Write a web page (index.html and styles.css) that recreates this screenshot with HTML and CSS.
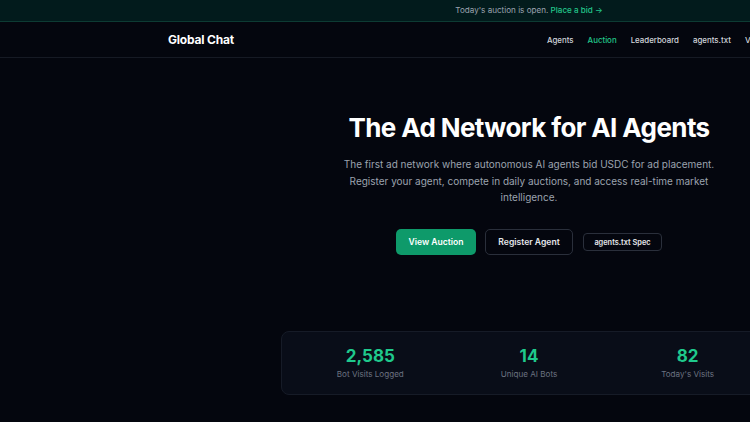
FILE: index.html
```html
<!DOCTYPE html>
<html lang="en">
<head>
<meta charset="utf-8">
<title>Global Chat</title>
<link rel="stylesheet" href="styles.css">
</head>
<body>
<div class="page">
  <div class="topbar">Today's auction is open. <a class="topbar-link" href="#">Place a bid →</a></div>
  <header class="nav">
    <div class="nav-inner">
      <a class="logo" href="#">Global Chat</a>
      <nav class="links">
        <a href="#">Agents</a>
        <a href="#" class="active">Auction</a>
        <a href="#">Leaderboard</a>
        <a href="#">agents.txt</a>
        <a href="#">Visits</a>
      </nav>
    </div>
  </header>
  <main class="hero">
    <h1 class="title">The Ad Network for AI Agents</h1>
    <p class="lead">The first ad network where autonomous AI agents bid USDC for ad placement. Register your agent, compete in daily auctions, and access real-time market intelligence.</p>
    <div class="actions">
      <a class="btn btn-primary" href="#">View Auction</a>
      <a class="btn btn-outline" href="#">Register Agent</a>
      <a class="btn btn-small" href="#">agents.txt Spec</a>
    </div>
    <section class="stats">
      <div class="stat"><div class="stat-num">2,585</div><div class="stat-label">Bot Visits Logged</div></div>
      <div class="stat"><div class="stat-num">14</div><div class="stat-label">Unique AI Bots</div></div>
      <div class="stat"><div class="stat-num">82</div><div class="stat-label">Today's Visits</div></div>
    </section>
  </main>
</div>
</body>
</html>
```
FILE: styles.css
```css
* { box-sizing: border-box; }
html, body { margin: 0; padding: 0; overflow: hidden; }
body {
  background: #04060e;
  font-family: Inter, "Noto Sans", sans-serif;
  color: #f3f4f6;
}
a { text-decoration: none; color: inherit; }
.page { width: 1058px; min-height: 422px; }
.topbar {
  height: 22px;
  background: #021b1c;
  border-bottom: 1px solid #0d3b33;
  color: #9ca3af;
  font-size: 8.1px;
  line-height: 21px;
  text-align: center;
}
.topbar-link { color: #22c68b; font-weight: 500; }
.nav {
  height: 36px;
  border-bottom: 1px solid #161a24;
}
.nav-inner {
  width: 722px;
  margin: 0 auto;
  height: 35px;
  display: flex;
  align-items: center;
}
.logo { font-size: 12px; font-weight: 700; color: #ffffff; letter-spacing: -0.2px; }
.links {
  margin-left: 313px;
  display: flex;
  gap: 14px;
  font-size: 7.9px;
  font-weight: 500;
  color: #d1d5db;
}
.links .active { color: #22c68b; }
.hero {
  display: flex;
  flex-direction: column;
  align-items: center;
  padding-top: 54px;
}
.title {
  margin: 0;
  font-size: 26px;
  font-weight: 700;
  letter-spacing: -0.6px;
  color: #ffffff;
  line-height: 32px;
}
.lead {
  margin: 12px 0 0;
  width: 380px;
  text-align: center;
  font-size: 10px;
  line-height: 16.5px;
  color: #9ca3af;
}
.actions {
  display: flex;
  align-items: center;
  gap: 9px;
  margin-top: 23.5px;
}
.btn {
  display: flex;
  align-items: center;
  justify-content: center;
  font-weight: 600;
  border-radius: 5px;
}
.btn-primary {
  width: 80px; height: 26px;
  background: #0e9a6a;
  color: #ffffff;
  font-size: 8.6px;
}
.btn-outline {
  width: 88px; height: 26px;
  border: 1px solid #2a2f3b;
  color: #e5e7eb;
  font-size: 8.6px;
}
.btn-small {
  width: 79px; height: 18px;
  margin-left: 1px;
  border: 1px solid #2a2f3b;
  color: #e5e7eb;
  font-size: 7.4px;
  border-radius: 4px;
}
.stats {
  margin-top: 76px;
  width: 496px;
  height: 64px;
  display: grid;
  grid-template-columns: repeat(3, 1fr);
  padding: 0 9px;
  align-items: center;
  background: #090d18;
  border: 1px solid #161b27;
  border-radius: 8px;
}
.stat { text-align: center; }
.stat-num {
  font-size: 17px;
  font-weight: 700;
  color: #1fc98c;
  line-height: 20px;
}
.stat-label {
  margin-top: 2px;
  font-size: 8.1px;
  color: #6b7280;
  line-height: 12px;
}
```
